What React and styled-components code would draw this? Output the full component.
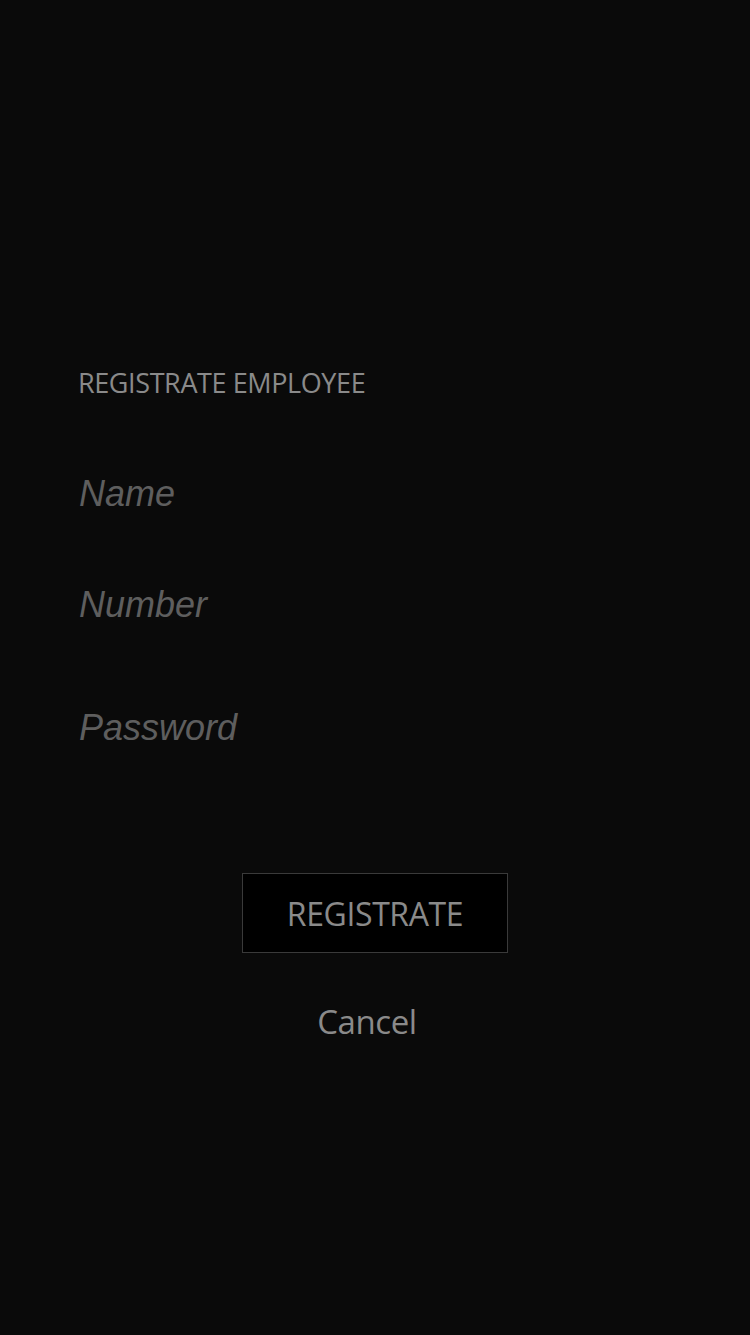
import React from "react";
import styled, { createGlobalStyle } from "styled-components";

const Global = createGlobalStyle`
  html, body { margin: 0; padding: 0; background: #0a0a0a; }
  #root { min-height: 1335px; background: #0a0a0a; }
`;

const Page = styled.div`
  height: 1335px;
  box-sizing: border-box;
  padding: 366px 78px 0 78px;
  display: flex;
  flex-direction: column;
`;

const Title = styled.h1`
  margin: 0;
  font-family: "Open Sans", sans-serif;
  font-weight: 400;
  font-size: 27px;
  line-height: 34px;
  letter-spacing: -0.4px;
  color: #8a8a8a;
`;

const Form = styled.form`
  display: flex;
  flex-direction: column;
  margin-top: 74px;
`;

const Field = styled.input`
  display: block;
  width: 100%;
  box-sizing: border-box;
  background: transparent;
  border: none;
  outline: none;
  padding: 0 0 0 1px;
  margin: 0 0 ${(p) => p.$gap}px 0;
  height: 40px;
  font-family: "Liberation Sans", Arial, sans-serif;
  font-style: italic;
  font-size: 36px;
  color: #8a8a8a;
  &::placeholder { color: #5e5e5e; opacity: 1; }
`;

const Actions = styled.div`
  display: flex;
  flex-direction: column;
  align-items: center;
  margin-top: ${(p) => p.$top}px;
`;

const PrimaryButton = styled.button`
  width: 266px;
  height: 80px;
  box-sizing: border-box;
  background: #000;
  border: 1px solid #3a3a3a;
  color: #8a8a8a;
  font-family: "Open Sans", sans-serif;
  font-size: 32px;
  letter-spacing: -0.4px;
  padding: 0;
  cursor: pointer;
`;

const LinkButton = styled.button`
  margin-top: 46px;
  margin-right: 16px;
  background: transparent;
  border: none;
  padding: 0;
  color: #8a8a8a;
  font-family: "Open Sans", sans-serif;
  font-size: 33px;
  letter-spacing: -0.4px;
  cursor: pointer;
`;

export default function App() {
  return (
    <>
      <Global />
      <Page>
        <Title>REGISTRATE EMPLOYEE</Title>
        <Form onSubmit={(e) => e.preventDefault()}>
          <Field $gap={71} placeholder="Name" />
          <Field $gap={83} placeholder="Number" />
          <Field $gap={0} type="password" placeholder="Password" />
        </Form>
        <Actions $top={125}>
          <PrimaryButton type="button">REGISTRATE</PrimaryButton>
          <LinkButton type="button">Cancel</LinkButton>
        </Actions>
      </Page>
    </>
  );
}
